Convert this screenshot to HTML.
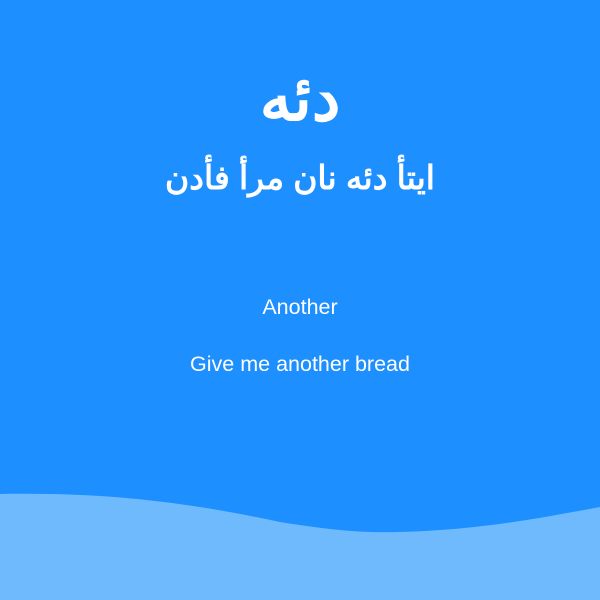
<!DOCTYPE html>
<html><head><meta charset="utf-8"><style>
html,body{margin:0;padding:0;}
body{width:600px;height:600px;background:#1e8ffe;position:relative;overflow:hidden;font-family:"Liberation Sans","Noto Sans CJK SC",sans-serif;color:#fff;}
.t{position:absolute;left:0;width:600px;text-align:center;white-space:nowrap;}
</style></head><body>
<div class="t" style="top:58px;font-size:64px;font-weight:bold;line-height:80px;" dir="rtl">دئه</div>
<div class="t" style="top:156px;font-size:33px;font-weight:bold;line-height:44px;" dir="rtl">ايتأ دئه نان مرأ فأدن</div>
<div class="t" style="top:294px;font-size:21.5px;line-height:26px;">Another</div>
<div class="t" style="top:351px;font-size:21.5px;line-height:26px;">Give me another bread</div>
<svg width="600" height="600" style="position:absolute;left:0;top:0">
<path d="M0,494 C120,492 200,505 280,522 C330,530 360,533 400,532 C480,530 540,518 600,507 V600 H0 Z" fill="#6fbafd"/>
</svg>
</body></html>
